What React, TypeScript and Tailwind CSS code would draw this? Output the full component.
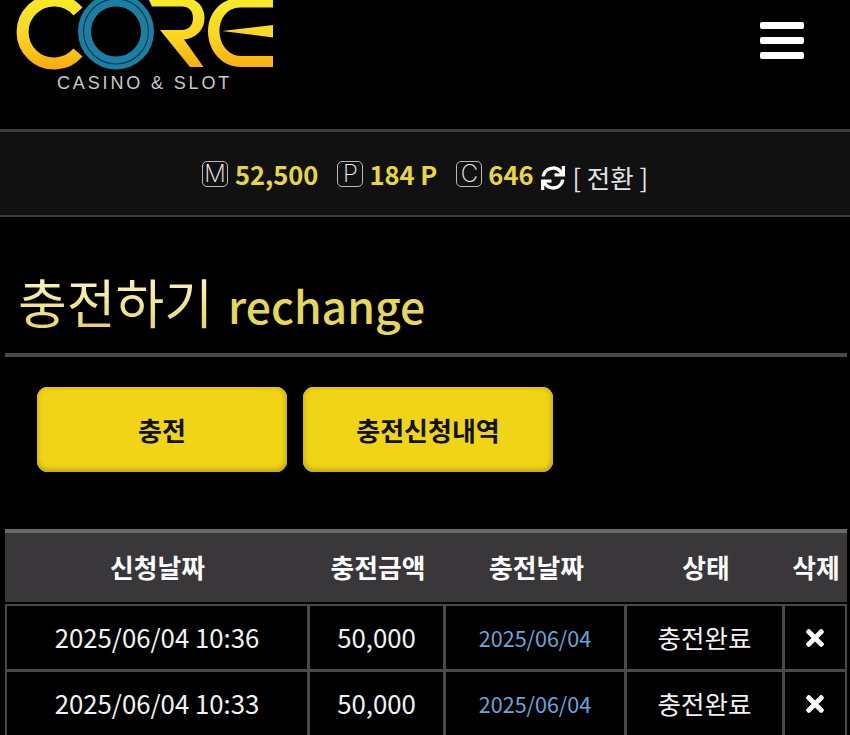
import React from 'react';
import { FaSync, FaTimes } from 'react-icons/fa';

const kr = "font-['Noto_Sans_CJK_KR','Noto_Sans',sans-serif]";

const rows = [
  { requested: '2025/06/04 10:36', amount: '50,000', charged: '2025/06/04', status: '충전완료' },
  { requested: '2025/06/04 10:33', amount: '50,000', charged: '2025/06/04', status: '충전완료' },
];

const Logo = () => (
  <div className="relative h-[95px] w-[275px]">
    <svg width="275" height="72" viewBox="0 0 275 72" className="block">
      <defs>
        <linearGradient id="gold" x1="0" y1="0" x2="0" y2="70" gradientUnits="userSpaceOnUse">
          <stop offset="0" stopColor="#f8e92a" />
          <stop offset="0.55" stopColor="#fbd41c" />
          <stop offset="1" stopColor="#f9a90e" />
        </linearGradient>
      </defs>
      {/* C */}
      <path d="M78 52.5 A31.5 31.5 0 1 1 78 11.5" fill="none" stroke="url(#gold)" strokeWidth="12" />
      {/* O */}
      <circle cx="116" cy="31.5" r="31.5" fill="#000" stroke="#1a7fa3" strokeWidth="13" />
      <circle cx="116" cy="31.5" r="32.5" fill="none" stroke="#0b3a4e" strokeWidth="1.2" />
      {/* R */}
      <path
        d="M148 -2 H185 C197 -2 204.5 7 204.5 18 C204.5 30 196 38 184 39.5 L203.5 67 H190 L160 30 H182 C189 30 193 25 193 18 C193 11 189 6.5 182 6.5 H152 Z"
        fill="url(#gold)"
      />
      {/* E */}
      <path
        d="M273 -2 V7.5 H240 C227 7.5 219.5 19 219.5 31 C219.5 45 229 56 241 56 H273 V67 H241 C222 67 208 51 208 31 C208 13 221 -2 240 -2 Z"
        fill="url(#gold)"
      />
      <path d="M222 31 L273 25 V37.5 Z" fill="url(#gold)" />
    </svg>
    <div className="absolute left-[57px] top-[73px] font-['Liberation_Sans',sans-serif] text-[18px] leading-[20px] tracking-[2.85px] text-[#c9c9c9] whitespace-nowrap">
      CASINO &amp; SLOT
    </div>
  </div>
);

const Badge = ({ letter }: { letter: string }) => (
  <span className="flex h-[26px] w-[26px] items-center justify-center rounded-[5px] border-[1.5px] border-[#b8b8b8] font-['Inter',sans-serif] text-[24px] font-extralight leading-none text-[#f0f0f0]">
    {letter}
  </span>
);

const App = () => {
  return (
    <div className={`h-[735px] w-[850px] overflow-hidden bg-black ${kr}`}>
      {/* Header */}
      <header className="flex h-[129px] items-start justify-between pr-[46px]">
        <Logo />
        <div className="mt-[22px] flex w-[44px] flex-col gap-[8px]">
          <span className="h-[7px] rounded-[2px] bg-white" />
          <span className="h-[7px] rounded-[2px] bg-white" />
          <span className="h-[7px] rounded-[2px] bg-white" />
        </div>
      </header>

      {/* Balance bar */}
      <div className="flex h-[88px] items-center justify-center border-y-[2px] border-t-[3px] border-[#3c3c3c] bg-[#111111]">
        <Badge letter="M" />
        <span className="ml-[7px] text-[25.5px] font-bold leading-none text-[#e8d63c]">52,500</span>
        <span className="ml-[19px]"><Badge letter="P" /></span>
        <span className="ml-[6px] text-[25.5px] font-bold leading-none text-[#e8d63c]">184 P</span>
        <span className="ml-[19px]"><Badge letter="C" /></span>
        <span className="ml-[6px] text-[25.5px] font-bold leading-none text-[#e8d63c]">646</span>
        <FaSync className="ml-[7px] mt-[9px] text-white" size={24} />
        <span className="ml-[8px] mt-[6px] text-[25.5px] leading-none text-[#e4e4e4]">[ 전환 ]</span>
      </div>

      {/* Title */}
      <div className="ml-[5px] mr-[3px] flex h-[140px] items-end border-b-[4px] border-[#4a4849] pb-[18px] pl-[13px]">
        <h1 className="flex items-baseline gap-[15px] leading-[60px]">
          <span className="bg-linear-to-b from-[#fdf8c8] to-[#e8d45e] bg-clip-text text-[53px] text-transparent">충전하기</span>
          <span className="text-[44.5px] font-medium text-[#e6d758]">rechange</span>
        </h1>
      </div>

      {/* Tabs */}
      <div className="flex gap-[16px] pl-[37px] pt-[30px]">
        <button className="h-[85px] w-[250px] rounded-[11px] bg-[#efd516] text-[26px] font-bold text-[#111] shadow-[inset_0_-3px_4px_#c4aa10,inset_-3px_0_4px_#dcc113,inset_3px_0_4px_#e4ca14,inset_0_2px_3px_#e2c814]">
          충전
        </button>
        <button className="h-[85px] w-[250px] rounded-[11px] bg-[#efd516] text-[26px] font-bold text-[#111] shadow-[inset_0_-3px_4px_#c4aa10,inset_-3px_0_4px_#dcc113,inset_3px_0_4px_#e4ca14,inset_0_2px_3px_#e2c814]">
          충전신청내역
        </button>
      </div>

      {/* History table */}
      <table className="ml-[5px] mt-[57px] w-[842px] table-fixed border-separate border-spacing-0 text-center text-white">
        <thead>
          <tr className="h-[75px] text-[25.75px] font-bold">
            <th className="w-[305px] border-t-[4px] border-b-[2px] border-t-[#686868] border-b-black bg-[#3a373b]">신청날짜</th>
            <th className="w-[136px] border-t-[4px] border-b-[2px] border-t-[#686868] border-b-black bg-[#3a373b]">충전금액</th>
            <th className="w-[181px] border-t-[4px] border-b-[2px] border-t-[#686868] border-b-black bg-[#3a373b]">충전날짜</th>
            <th className="w-[158px] border-t-[4px] border-b-[2px] border-t-[#686868] border-b-black bg-[#3a373b]">상태</th>
            <th className="border-t-[4px] border-b-[2px] border-t-[#686868] border-b-black bg-[#3a373b]">삭제</th>
          </tr>
        </thead>
        <tbody className="text-[25.75px] text-[#f2f2f2]">
          {rows.map((row, i) => (
            <tr key={row.requested} className={i === 0 ? 'h-[68px]' : 'h-[66px]'}>
              <td className={`border-b-[3px] border-l-[2px] border-r-[3px] border-[#4a484a] ${i === 0 ? 'border-t-[2px]' : ''}`}>{row.requested}</td>
              <td className={`border-b-[3px] border-r-[3px] border-[#4a484a] ${i === 0 ? 'border-t-[2px]' : ''}`}>{row.amount}</td>
              <td className={`border-b-[3px] border-r-[3px] border-[#4a484a] pt-[2px] text-[21.5px] text-[#68a6dc] ${i === 0 ? 'border-t-[2px]' : ''}`}>{row.charged}</td>
              <td className={`border-b-[3px] border-r-[3px] border-[#4a484a] text-[25.5px] ${i === 0 ? 'border-t-[2px]' : ''}`}>{row.status}</td>
              <td className={`border-b-[3px] border-r-[2px] border-[#4a484a] ${i === 0 ? 'border-t-[2px]' : ''}`}>
                <FaTimes className="mx-auto text-white" size={26} />
              </td>
            </tr>
          ))}
        </tbody>
      </table>
    </div>
  );
};

export default App;
